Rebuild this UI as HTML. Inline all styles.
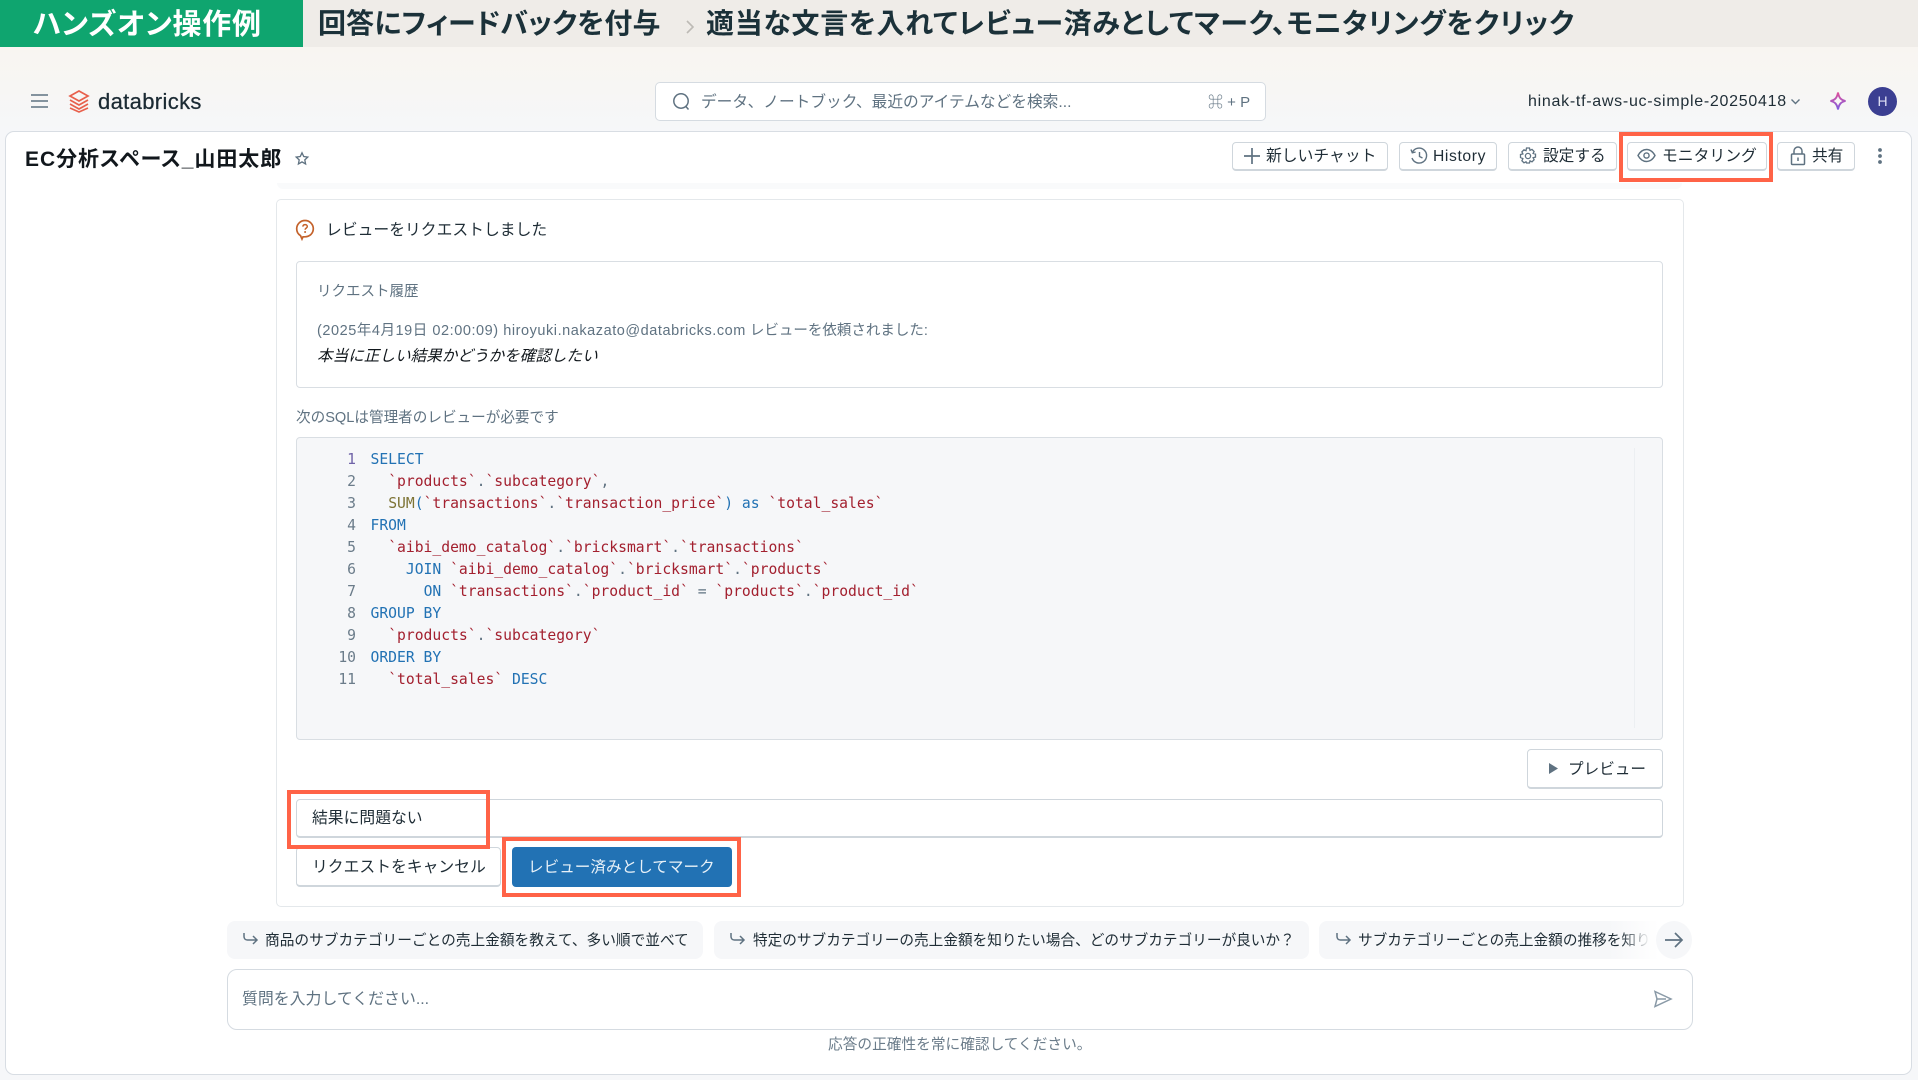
<!DOCTYPE html>
<html lang="ja"><head><meta charset="utf-8"><title>Databricks</title>
<style>
html,body{margin:0;padding:0}
body{width:1918px;height:1080px;overflow:hidden;position:relative;background:linear-gradient(#f8f5f1 48px,#f7f6f4 90px,#f6f7f9 130px);font-family:"Liberation Sans","Noto Sans CJK JP",sans-serif;color:#11171c}
.a{position:absolute;box-sizing:border-box}
.t{position:absolute;white-space:nowrap;line-height:20px;height:20px;margin-top:1.4px}
.b{position:absolute;box-sizing:border-box;background:#fff;border:1px solid #cfd6dc;border-bottom:2px solid #cfd6dc;border-radius:4px}
.r{position:absolute;box-sizing:border-box;border:4px solid #ff6347;pointer-events:none;z-index:5}
.g{color:#5f7281}
.h{font-weight:700;font-feature-settings:"palt";color:#1b3139}
svg{position:absolute;overflow:visible}
pre{position:absolute;margin:1px 0 0;font:14.7px/22px "DejaVu Sans Mono","Liberation Mono",monospace}
.k{color:#2272b4}.s{color:#a3202f}.p{color:#5f7281}.f{color:#7d7334}
.pill{position:absolute;top:921px;height:38px;background:#f6f7f9;border-radius:8px}
.l{letter-spacing:.55px}
</style></head><body>

<div class="a" style="left:0;top:0;width:1918px;height:47px;background:#efece8"></div>
<div class="a" style="left:0;top:0;width:303px;height:47px;background:#0fa56f"></div>
<div class="t" style="left:33px;top:14px;font-size:29px;font-weight:700;color:#fff;font-feature-settings:'palt';letter-spacing:.75px">ハンズオン操作例</div>
<div class="t h" style="left:318px;top:13px;font-size:28px;letter-spacing:.15px">回答にフィードバックを付与</div>
<svg style="left:684px;top:18px" width="12" height="18"><path d="M3 3l6 6-6 6" fill="none" stroke="#bdbab5" stroke-width="1.6"/></svg>
<div class="t h" style="left:706px;top:13px;font-size:28px;letter-spacing:.7px">適当な文言を入れてレビュー済みとしてマーク、モニタリングをクリック</div>

<!-- top bar -->
<svg style="left:31px;top:94px" width="17" height="14"><path d="M0 1h17M0 7h17M0 13h17" stroke="#5f7281" stroke-width="1.6"/></svg>
<svg style="left:69px;top:90px" width="20" height="23" viewBox="0 0 20 23"><path d="M10 1l9 5-9 5-9-5zM1 10l9 5 9-5M1 14l9 5 9-5M1 18l9 4 9-4" fill="none" stroke="#e8604c" stroke-width="1.7"/></svg>
<div class="t" style="left:98px;top:91px;font-size:22px;letter-spacing:.35px;color:#1b2a33;-webkit-text-stroke:.25px #1b2a33">databricks</div>

<div class="a" style="left:655px;top:82px;width:611px;height:39px;background:#fff;border:1px solid #d5dbe1;border-radius:5px"></div>
<svg style="left:672px;top:92px" width="20" height="20"><circle cx="9" cy="9" r="7.2" fill="none" stroke="#5f7281" stroke-width="1.5"/><path d="M13.5 14l3 3.5" stroke="#5f7281" stroke-width="1.5"/></svg>
<div class="t g" style="left:701px;top:92px;font-size:15.7px">データ、ノートブック、最近のアイテムなどを検索...</div>
<div class="t g" style="left:1208px;top:92px;font-size:15px">⌘ + P</div>

<div class="t" style="left:1528px;top:91px;font-size:16px;letter-spacing:.72px;color:#1f2d36">hinak-tf-aws-uc-simple-20250418</div>
<svg style="left:1790px;top:98px" width="11" height="8"><path d="M1.5 1.5L5.5 5.5 9.500 1.500" fill="none" stroke="#5f7281" stroke-width="1.4"/></svg>
<svg style="left:1829px;top:91px" width="18" height="20"><defs><linearGradient id="sp" x1="0" y1="0" x2="0" y2="1"><stop offset="0" stop-color="#e0509a"/><stop offset="1" stop-color="#7d5ce0"/></linearGradient></defs><path d="M9 1.500C10 7 12 9 16.500 10 12 11 10 13 9 18.500 8 13 6 11 1.500 10 6 9 8 7 9 1.500z" fill="none" stroke="url(#sp)" stroke-width="1.9"/></svg>
<div class="a" style="left:1868px;top:87px;width:29px;height:29px;border-radius:50%;background:#3b3f92;color:#dfe0f5;font-size:14px;line-height:29px;text-align:center">H</div>

<!-- main card -->
<div class="a" style="left:5px;top:131px;width:1907px;height:944px;background:#fff;border:1px solid #d8dde3;border-radius:9px"></div>
<div class="t" style="left:25px;top:149px;font-size:21px;font-weight:700;font-feature-settings:'palt';letter-spacing:.95px;color:#11171c">EC分析スペース_山田太郎</div>
<svg style="left:295px;top:151px" width="14" height="15" viewBox="0 0 16 16"><path d="M8 1.500l2 4.300 4.600.6-3.400 3.200.9 4.600L8 11.900 3.900 14.200l.9-4.600L1.400 6.400 6 5.800z" fill="none" stroke="#5f7281" stroke-width="1.500"/></svg>

<div class="b" style="left:1232px;top:142px;width:156px;height:29px"></div>
<svg style="left:1243px;top:147px" width="18" height="18"><path d="M9 1v16M1 9h16" stroke="#5f7281" stroke-width="1.700"/></svg>
<div class="t" style="left:1266px;top:146px;font-size:15.8px;color:#1f2d36">新しいチャット</div>

<div class="b" style="left:1399px;top:142px;width:98px;height:29px"></div>
<svg style="left:1409px;top:147px" width="19" height="18" viewBox="0 0 19 18"><path d="M3.500 5A7.500 7.500 0 1 1 3 11M2 2.500L3.300 5.800 6.600 5M10.500 5v4.500l3 1.500" fill="none" stroke="#5f7281" stroke-width="1.400"/></svg>
<div class="t" style="left:1433px;top:146px;font-size:15.7px;letter-spacing:.6px;color:#1f2d36">History</div>

<div class="b" style="left:1508px;top:142px;width:109px;height:29px"></div>
<svg style="left:1519px;top:147px" width="18" height="18" viewBox="0 0 18 18"><circle cx="9" cy="9" r="2.600" fill="none" stroke="#5f7281" stroke-width="1.300"/><path d="M7.500 1h3l.5 2.300 2-.9 2.100 2.100-1 2 2.400.6v3l-2.400.6 1 2-2.100 2.100-2-1-.5 2.200h-3L7 14.800l-2 1-2.100-2.100 1-2L1.500 10.500v-3l2.400-.6-1-2L5 2.800l2 .9z" fill="none" stroke="#5f7281" stroke-width="1.300"/></svg>
<div class="t" style="left:1543px;top:146px;font-size:15.7px;color:#1f2d36">設定する</div>

<div class="b" style="left:1627px;top:142px;width:140px;height:29px"></div>
<svg style="left:1637px;top:147px" width="19" height="17" viewBox="0 0 19 17"><path d="M1 8.500C3.500 4 6 2.500 9.500 2.500S15.500 4 18 8.500C15.500 13 13 14.500 9.500 14.500S3.500 13 1 8.500z" fill="none" stroke="#5f7281" stroke-width="1.400"/><circle cx="9.500" cy="8.500" r="2.600" fill="none" stroke="#5f7281" stroke-width="1.400"/></svg>
<div class="t" style="left:1662px;top:146px;font-size:15.8px;color:#1f2d36">モニタリング</div>

<div class="b" style="left:1777px;top:142px;width:78px;height:29px"></div>
<svg style="left:1790px;top:146px" width="16" height="20" viewBox="0 0 16 20"><rect x="1.500" y="8" width="13" height="10.500" rx="1" fill="none" stroke="#5f7281" stroke-width="1.500"/><path d="M4 8V5a4 4 0 0 1 8 0v3M8 11.500v3.500" fill="none" stroke="#5f7281" stroke-width="1.500"/></svg>
<div class="t" style="left:1812px;top:146px;font-size:15.7px;color:#1f2d36">共有</div>
<svg style="left:1877px;top:147px" width="6" height="18"><circle cx="3" cy="3" r="1.900" fill="#5f7281"/><circle cx="3" cy="9" r="1.900" fill="#5f7281"/><circle cx="3" cy="15" r="1.900" fill="#5f7281"/></svg>

<div class="r" style="left:1619px;top:132px;width:154px;height:50px"></div>

<!-- strip above card -->
<div class="a" style="left:277px;top:183px;width:1405px;height:6px;background:#f9fafb;border-radius:0 0 6px 6px"></div>

<!-- review card -->
<div class="a" style="left:276px;top:199px;width:1408px;height:708px;border:1px solid #e4e8eb;border-radius:5px;background:#fff"></div>
<svg style="left:295px;top:219px" width="20" height="21" viewBox="0 0 20 21"><path d="M10 1.500a8.300 8.300 0 0 1 8.300 8.300c0 4.600-3.700 8-8.300 8H8l-1 2.200-1.500-3.400C3 15.200 1.700 12.700 1.700 9.800A8.300 8.300 0 0 1 10 1.500z" fill="none" stroke="#c4622b" stroke-width="1.700"/><path d="M7.800 7.600c.2-1.300 1.100-2 2.300-2 1.300 0 2.200.8 2.200 1.900 0 1.700-2.200 1.600-2.200 3.300" fill="none" stroke="#c4622b" stroke-width="1.500"/><circle cx="10.100" cy="13" r="1" fill="#c4622b"/></svg>
<div class="t" style="left:326px;top:220px;font-size:15.8px;color:#1f2d36">レビューをリクエストしました</div>

<div class="a" style="left:296px;top:261px;width:1367px;height:127px;border:1px solid #d9dee3;border-radius:4px"></div>
<div class="t g" style="left:317px;top:281px;font-size:14.500px">リクエスト履歴</div>
<div class="t g" style="left:317px;top:320px;font-size:14.500px"><span class="l">(2025年4月19日 02:00:09) hiroyuki.nakazato@databricks.com</span> レビューを依頼されました:</div>
<div class="t" style="left:317px;top:346px;font-size:15.600px;font-style:italic;color:#11171c">本当に正しい結果かどうかを確認したい</div>
<div class="t g" style="left:296px;top:407px;font-size:14.600px">次のSQLは管理者のレビューが必要です</div>

<div class="a" style="left:296px;top:437px;width:1367px;height:303px;background:#f6f7f9;border:1px solid #d9dee3;border-radius:4px"></div>
<div class="a" style="left:1634px;top:448px;width:1px;height:280px;background:#eceff2"></div>
<pre class="p" style="left:325px;top:448px;width:31px;text-align:right;color:#6b7c8a"><span style="color:#6f63a8">1</span>
2
3
4
5
6
7
8
9
10
11</pre>
<pre style="left:370.5px;top:448px;color:#5f7281"><span class="k">SELECT</span>
  <span class="s">`products`</span>.<span class="s">`subcategory`</span>,
  <span class="f">SUM</span><span class="k">(</span><span class="s">`transactions`</span>.<span class="s">`transaction_price`</span><span class="k">)</span> <span class="k">as</span> <span class="s">`total_sales`</span>
<span class="k">FROM</span>
  <span class="s">`aibi_demo_catalog`</span>.<span class="s">`bricksmart`</span>.<span class="s">`transactions`</span>
    <span class="k">JOIN</span> <span class="s">`aibi_demo_catalog`</span>.<span class="s">`bricksmart`</span>.<span class="s">`products`</span>
      <span class="k">ON</span> <span class="s">`transactions`</span>.<span class="s">`product_id`</span> = <span class="s">`products`</span>.<span class="s">`product_id`</span>
<span class="k">GROUP BY</span>
  <span class="s">`products`</span>.<span class="s">`subcategory`</span>
<span class="k">ORDER BY</span>
  <span class="s">`total_sales`</span> <span class="k">DESC</span></pre>

<div class="b" style="left:1527px;top:749px;width:136px;height:40px"></div>
<svg style="left:1549px;top:763px" width="9" height="11"><path d="M0 0l9 5.500L0 11z" fill="#5f7281"/></svg>
<div class="t" style="left:1568px;top:759px;font-size:15.600px;color:#1f2d36">プレビュー</div>

<div class="a" style="left:296px;top:799px;width:1367px;height:39px;background:#fff;border:1px solid #cfd6dc;border-bottom:2px solid #cfd6dc;border-radius:4px"></div>
<div class="t" style="left:312px;top:808px;font-size:15.800px;color:#1f2d36">結果に問題ない</div>

<div class="b" style="left:296px;top:847px;width:205px;height:40px"></div>
<div class="t" style="left:312px;top:857px;font-size:15.800px;color:#1f2d36">リクエストをキャンセル</div>
<div class="a" style="left:512px;top:847px;width:220px;height:40px;background:#2272b4;border-radius:4px"></div>
<div class="t" style="left:528px;top:857px;font-size:15.600px;color:#e8f1f8">レビュー済みとしてマーク</div>

<div class="r" style="left:287px;top:790px;width:203px;height:59px"></div>
<div class="r" style="left:502px;top:837px;width:239px;height:60px"></div>

<!-- suggestions -->
<div class="pill" style="left:227px;width:476px"></div>
<svg style="left:242px;top:932px" width="17" height="15"><path d="M2 1v3.500c0 2 1.200 3.500 3.500 3.500H15M11 4l4 4-4 4" fill="none" stroke="#5f7281" stroke-width="1.500"/></svg>
<div class="t" style="left:265px;top:930px;font-size:14.700px;color:#1f2d36">商品のサブカテゴリーごとの売上金額を教えて、多い順で並べて</div>

<div class="pill" style="left:714px;width:595px"></div>
<svg style="left:729px;top:932px" width="17" height="15"><path d="M2 1v3.500c0 2 1.200 3.500 3.500 3.500H15M11 4l4 4-4 4" fill="none" stroke="#5f7281" stroke-width="1.500"/></svg>
<div class="t" style="left:753px;top:930px;font-size:14.650px;color:#1f2d36">特定のサブカテゴリーの売上金額を知りたい場合、どのサブカテゴリーが良いか？</div>

<div class="pill" style="left:1319px;width:340px;overflow:hidden;border-radius:8px 0 0 8px;background:linear-gradient(90deg,#f6f7f9 85%,#fff 100%)"></div>
<svg style="left:1335px;top:932px" width="17" height="15"><path d="M2 1v3.500c0 2 1.200 3.500 3.500 3.500H15M11 4l4 4-4 4" fill="none" stroke="#5f7281" stroke-width="1.500"/></svg>
<div class="a" style="left:1358px;top:931px;width:292px;height:20px;overflow:hidden;white-space:nowrap;line-height:20px;font-size:14.650px;color:#1f2d36;-webkit-mask-image:linear-gradient(90deg,#000 90%,transparent)">サブカテゴリーごとの売上金額の推移を知りたい</div>
<div class="a" style="left:1656px;top:921px;width:36px;height:38px;border-radius:50%;background:#f6f7f9"></div>
<svg style="left:1665px;top:932px" width="18" height="16"><path d="M0 8h17M10 1l7 7-7 7" fill="none" stroke="#5f7281" stroke-width="1.700"/></svg>

<!-- input -->
<div class="a" style="left:227px;top:969px;width:1466px;height:61px;background:#fff;border:1px solid #d5dbe1;border-radius:10px"></div>
<div class="t g" style="left:242px;top:989px;font-size:15.900px">質問を入力してください...</div>
<svg style="left:1654px;top:990px" width="18" height="18" viewBox="0 0 18 18"><path d="M1 1.500L17 9 1 16.500 3 9zM3 9h9" fill="none" stroke="#8a9aa7" stroke-width="1.500"/></svg>
<div class="t" style="left:828px;top:1034px;font-size:14.700px;color:#6b7c8a">応答の正確性を常に確認してください。</div>

</body></html>
